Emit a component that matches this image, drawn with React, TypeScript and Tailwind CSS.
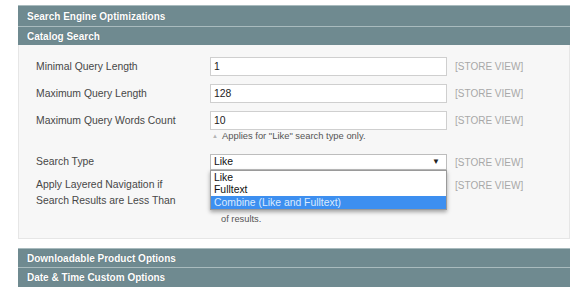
import React from 'react';

const font = "font-['Liberation_Sans',Arial,sans-serif]";

function SectionHeader({ title, h }: { title: string; h: string }) {
    return (
        <div className={`${h} bg-[#6f8a90] border-t border-[#a9bbbe] flex items-center pl-[9px]`}>
            <span className="text-[10px] font-bold text-white [text-shadow:0_0_1px_rgba(0,0,0,0.25)]">{title}</span>
        </div>
    );
}

function Scope() {
    return <span className="ml-[8px] text-[10px] text-[#a8a8a8]">[STORE VIEW]</span>;
}

function TextRow({ label, value, className = '' }: { label: string; value: string; className?: string }) {
    return (
        <div className={`flex items-center h-[19px] ${className}`}>
            <div className="w-[174px] text-[10.4px] text-[#474747]">{label}</div>
            <div className="w-[237px] h-[19px] bg-white border border-[#cfcfcf] flex items-center pl-[3px] text-[10.4px] text-[#222]">
                {value}
            </div>
            <Scope />
        </div>
    );
}

export default function App() {
    return (
        <div className={`w-[581px] h-[301px] bg-white pt-[5px] pl-[18px] overflow-hidden ${font}`}>
            <div className="w-[552px]">
                <SectionHeader title="Search Engine Optimizations" h="h-[21px]" />
                <SectionHeader title="Catalog Search" h="h-[19px]" />

                <div className="h-[194px] bg-[#f7f7f7] border border-[#e6e6e6] border-t-0 pl-[17px] pt-[12px] flex flex-col">
                    <TextRow label="Minimal Query Length" value="1" />
                    <TextRow label="Maximum Query Length" value="128" className="mt-[8px]" />
                    <TextRow label="Maximum Query Words Count" value="10" className="mt-[8px]" />
                    <div className="ml-[174px] mt-[1px] h-[11px] flex items-center text-[9.4px] text-[#555]">
                        <span className="text-[6px] text-[#b5b5b5] mr-[4px] ml-[2px]">▲</span>
                        Applies for "Like" search type only.
                    </div>

                    <div className="flex items-center h-[16px] mt-[12px]">
                        <div className="w-[174px] text-[10.4px] text-[#474747]">Search Type</div>
                        <div className="relative w-[237px] h-[16px]">
                            <div className="h-full bg-white border border-[#bdbdbd] flex items-center justify-between pl-[3px] pr-[6px] text-[10.4px] text-[#111]">
                                <span>Like</span>
                                <span className="text-[8px] text-[#222]">▼</span>
                            </div>
                            <div className="absolute left-0 top-[16px] w-[237px] bg-white border border-[#9a9a9a] pt-[1px] shadow-[0_2px_4px_rgba(0,0,0,0.35)] z-10 text-[10.4px] text-[#111]">
                                <div className="h-[12px] flex items-center pl-[3px]">Like</div>
                                <div className="h-[12px] flex items-center pl-[3px]">Fulltext</div>
                                <div className="h-[13px] flex items-center pl-[3px] bg-[#3d8ff0] text-[#d9ebff]">Combine (Like and Fulltext)</div>
                            </div>
                        </div>
                        <Scope />
                    </div>

                    <div className="flex mt-[7px]">
                        <div className="w-[174px] text-[10.4px] leading-[16px] text-[#474747]">
                            Apply Layered Navigation if<br />Search Results are Less Than
                        </div>
                        <div className="w-[237px]">
                            <div className="h-[19px] bg-white border border-[#cfcfcf]" />
                            <div className="h-[18px]" />
                            <div className="pl-[11px] h-[12px] flex items-center text-[9.3px] text-[#555]">of results.</div>
                        </div>
                        <div className="h-[16px] flex items-center">
                            <Scope />
                        </div>
                    </div>
                </div>

                <div className="h-[9px]" />
                <SectionHeader title="Downloadable Product Options" h="h-[19px]" />
                <SectionHeader title="Date & Time Custom Options" h="h-[20px]" />
            </div>
        </div>
    );
}
